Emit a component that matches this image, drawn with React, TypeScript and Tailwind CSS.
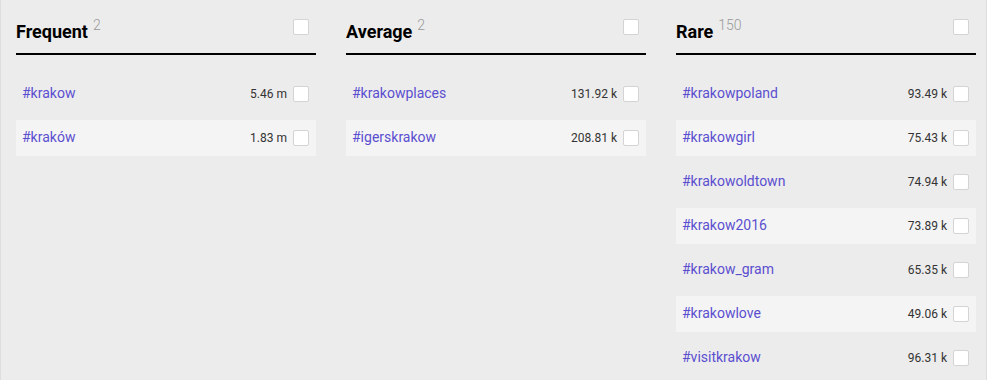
import { FC } from "react";

interface Tag {
  name: string;
  count: string;
}

interface Group {
  title: string;
  total: number;
  tags: Tag[];
}

const groups: Group[] = [
  {
    title: "Frequent",
    total: 2,
    tags: [
      { name: "#krakow", count: "5.46 m" },
      { name: "#kraków", count: "1.83 m" },
    ],
  },
  {
    title: "Average",
    total: 2,
    tags: [
      { name: "#krakowplaces", count: "131.92 k" },
      { name: "#igerskrakow", count: "208.81 k" },
    ],
  },
  {
    title: "Rare",
    total: 150,
    tags: [
      { name: "#krakowpoland", count: "93.49 k" },
      { name: "#krakowgirl", count: "75.43 k" },
      { name: "#krakowoldtown", count: "74.94 k" },
      { name: "#krakow2016", count: "73.89 k" },
      { name: "#krakow_gram", count: "65.35 k" },
      { name: "#krakowlove", count: "49.06 k" },
      { name: "#visitkrakow", count: "96.31 k" },
    ],
  },
];

const Box: FC = () => (
  <span className="block w-4 h-4 shrink-0 bg-white border border-[#d4d4d4] rounded-[2px]"></span>
);

const GroupColumn: FC<{ group: Group }> = ({ group }) => {
  const rows = group.tags.map((t, idx) => {
    return (
      <div
        key={`${group.title}-${idx}`}
        className={`${
          idx % 2 === 1 ? "bg-[#f4f4f4]" : ""
        } flex flex-row items-center h-9 pl-1.5 pr-[7px]`}
      >
        <span className="text-[14px] text-[#5b4fd0] flex-1 -mt-px">{t.name}</span>
        <span className="text-[12px] text-[#333] mr-1.5">{t.count}</span>
        <Box />
      </div>
    );
  });

  return (
    <div className="flex flex-col w-[300px]">
      <div className="flex flex-row justify-between items-start h-[55px] border-b-2 border-black">
        <div className="flex flex-row items-start mt-[21px]">
          <span className="text-[18px] leading-[22px] font-bold text-black">{group.title}</span>
          <span className="text-[14px] leading-[14px] font-light text-[#999] ml-[5px] -mt-[3px]">
            {group.total}
          </span>
        </div>
        <div className="mt-[19px] mr-[7px]">
          <Box />
        </div>
      </div>
      <div className="flex flex-col gap-2 mt-[21px]">{rows}</div>
    </div>
  );
};

export default function App() {
  return (
    <div
      className="w-[987px] h-[380px] bg-[#ececec] border-x border-[#dedede] pl-[15px] flex flex-row gap-[30px] overflow-hidden"
      style={{ fontFamily: "Roboto, 'Liberation Sans', sans-serif" }}
    >
      {groups.map((g) => (
        <GroupColumn key={g.title} group={g} />
      ))}
    </div>
  );
}
